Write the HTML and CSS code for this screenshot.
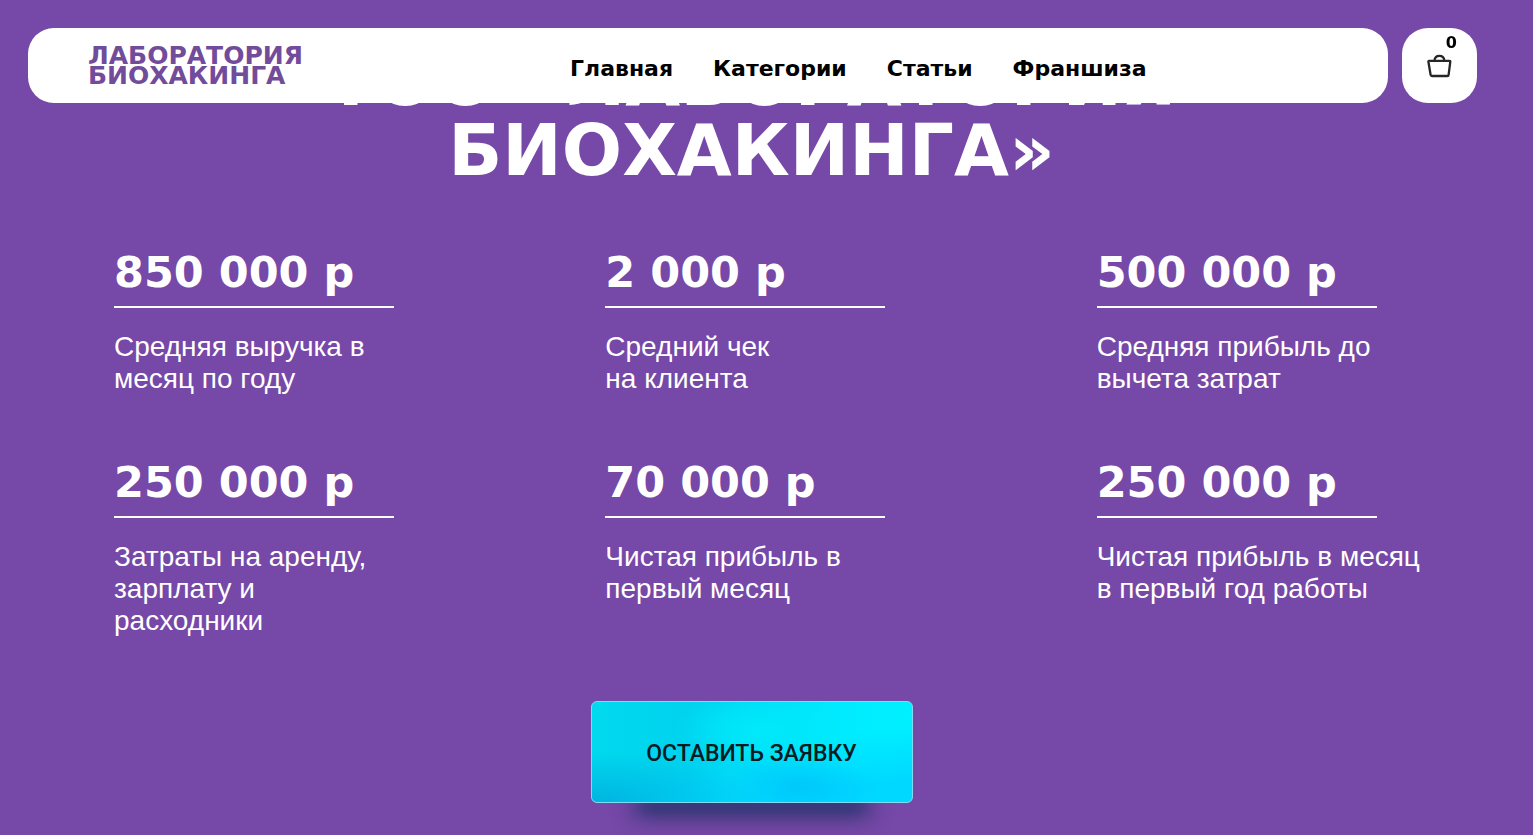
FILE: index.html
```html
<!DOCTYPE html>
<html lang="ru">
<head>
  <meta charset="UTF-8">
  <meta name="viewport" content="width=device-width, initial-scale=1.0">
  <title>Лаборатория Биохакинга</title>
  <link rel="stylesheet" href="styles.css">
</head>
<body>
  <header class="header">
    <div class="header-bar">
      <a href="#" class="logo">ЛАБОРАТОРИЯ<br>БИОХАКИНГА</a>
      <nav class="nav">
        <a href="#">Главная</a>
        <a href="#">Категории</a>
        <a href="#">Статьи</a>
        <a href="#">Франшиза</a>
      </nav>
    </div>
    <button class="cart" type="button" aria-label="Корзина">
      <span class="cart-count">0</span>
      <svg class="cart-icon" viewBox="0 0 26 24" width="26" height="24" fill="none" stroke="#262626" stroke-width="2.3" stroke-linejoin="round" stroke-linecap="round">
        <path d="M2 6.800h20.500q.9 0 .8.900L21.600 20.800q-.1 1.200-1.300 1.200H5q-1.200 0-1.400-1.200L1.400 7.700q-.1-.9.600-.9z"/>
        <path d="M7.500 6.500C7.700 3.600 9.500 1.800 12.400 1.800s4.700 1.800 4.900 4.700"/>
      </svg>
    </button>
  </header>

  <main class="franchise">
    <h1 class="title">ТОО «ЛАБОРАТОРИЯ<br>БИОХАКИНГА»</h1>

    <section class="stats">
      <div class="stat">
        <h2>850 000 р</h2>
        <p>Средняя выручка в<br>месяц по году</p>
      </div>
      <div class="stat">
        <h2>2 000 р</h2>
        <p>Средний чек<br>на клиента</p>
      </div>
      <div class="stat">
        <h2>500 000 р</h2>
        <p>Средняя прибыль до<br>вычета затрат</p>
      </div>
      <div class="stat">
        <h2>250 000 р</h2>
        <p>Затраты на аренду,<br>зарплату и<br>расходники</p>
      </div>
      <div class="stat">
        <h2>70 000 р</h2>
        <p>Чистая прибыль в<br>первый месяц</p>
      </div>
      <div class="stat">
        <h2>250 000 р</h2>
        <p>Чистая прибыль в месяц<br>в первый год работы</p>
      </div>
    </section>

    <button class="btn" type="button">ОСТАВИТЬ ЗАЯВКУ</button>
  </main>
</body>
</html>
```
FILE: styles.css
```css
*{box-sizing:border-box;}
body{margin:0;background:#7648a7;color:#fff;font-family:"Liberation Sans",Arial,sans-serif;}

/* Header */
.header{position:fixed;top:28px;left:28px;right:56px;z-index:10;display:flex;gap:14px;}
.header-bar{flex:1;height:75px;padding:0 60px;background:#fff;border-radius:26px;display:flex;align-items:center;}
.logo{flex:0 0 482px;color:#724c9b;font:bold 25px/20px "DejaVu Sans",sans-serif;text-decoration:none;}
.nav{display:flex;gap:40px;padding-top:6px;}
.nav a{color:#000;font:bold 22px/24px "DejaVu Sans",sans-serif;text-decoration:none;white-space:nowrap;}
.cart{position:relative;width:75px;height:75px;padding:0;border:none;border-radius:26px;background:#fff;display:flex;align-items:center;justify-content:center;cursor:pointer;}
.cart-icon{display:block;}
.cart-count{position:absolute;top:7px;right:20px;color:#000;font:bold 16px/16px "DejaVu Sans",sans-serif;}

/* Franchise */
.franchise{padding:46px 30px 32px 0;}
.title{margin:0;text-align:center;font:bold 71px/70px "DejaVu Sans",sans-serif;}
.stats{display:grid;grid-template-columns:repeat(3,1fr);column-gap:168px;row-gap:63px;padding:0 83px 0 114px;margin-top:62px;}
.stat h2{width:280px;margin:0 0 23px;padding-bottom:10px;border-bottom:2px solid #fff;font:bold 43px/48px "DejaVu Sans",sans-serif;white-space:nowrap;}
.stat p{margin:0;font-size:28px;line-height:32px;white-space:nowrap;}

.btn{display:block;width:322px;height:102px;margin:64px auto 0;padding-top:4px;border:1px solid #7fdcf3;border-radius:6px;color:#041c22;font:500 23px/26px Roboto,sans-serif;cursor:pointer;
  background:
    radial-gradient(ellipse at 0% 100%,#00b4e0 0,rgba(0,180,224,0) 36%),
    radial-gradient(ellipse at 65% 85%,#00c8fb 0,rgba(0,200,251,0) 26%),
    radial-gradient(ellipse at 52% 28%,#00eafa 0,rgba(0,234,250,0) 36%),
    linear-gradient(170deg,rgba(0,238,255,0) 50%,#00d8ff 85%),
    linear-gradient(90deg,#00daee 0,#00d2ef 30%,#00eaff 75%,#00f0ff 100%);
  box-shadow:0 54px 24px -44px #16305f,0 54px 16px -48px #16305f;}
```
